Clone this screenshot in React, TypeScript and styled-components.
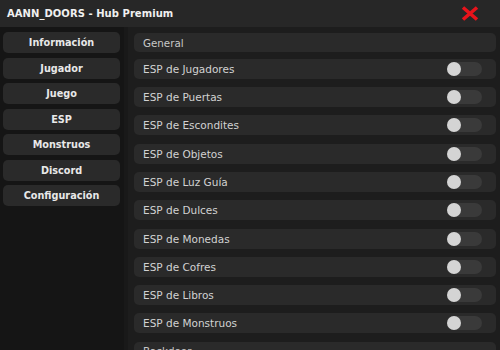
import styled, { createGlobalStyle } from 'styled-components'

const tabs = [
  'Información',
  'Jugador',
  'Juego',
  'ESP',
  'Monstruos',
  'Discord',
  'Configuración',
]

const toggles = [
  'ESP de Jugadores',
  'ESP de Puertas',
  'ESP de Escondites',
  'ESP de Objetos',
  'ESP de Luz Guía',
  'ESP de Dulces',
  'ESP de Monedas',
  'ESP de Cofres',
  'ESP de Libros',
  'ESP de Monstruos',
]

export default function App() {
  return (
    <>
      <GlobalStyle />
      <Window>
        <TitleBar>
          <Title>AANN_DOORS - Hub Premium</Title>
          <CloseButton aria-label="Cerrar">
            <svg width="18" height="15" viewBox="0 0 18 15">
              <path
                d="M2 1.5 L16 13.5 M16 1.5 L2 13.5"
                stroke="#e8131b"
                strokeWidth="3.6"
                strokeLinecap="butt"
              />
            </svg>
          </CloseButton>
        </TitleBar>
        <Body>
          <Sidebar>
            {tabs.map((t) => (
              <TabButton key={t}>{t}</TabButton>
            ))}
          </Sidebar>
          <Content>
            <SectionHeader>General</SectionHeader>
            {toggles.map((t) => (
              <Row key={t}>
                <RowLabel>{t}</RowLabel>
                <Switch>
                  <Knob />
                </Switch>
              </Row>
            ))}
            <SectionHeader>Backdoor</SectionHeader>
          </Content>
        </Body>
      </Window>
    </>
  )
}

const GlobalStyle = createGlobalStyle`
  html, body {
    margin: 0;
    padding: 0;
    background: #1d1d1d;
  }
  * {
    box-sizing: border-box;
  }
`

const Window = styled.div`
  width: 500px;
  height: 350px;
  display: flex;
  flex-direction: column;
  overflow: hidden;
  font-family: 'DejaVu Sans', 'Open Sans', sans-serif;
  color: #e6e6e6;
`

const TitleBar = styled.div`
  height: 27px;
  flex: none;
  display: flex;
  align-items: center;
  justify-content: space-between;
  padding: 0 21px 0 7px;
  background: #272727;
`

const Title = styled.div`
  font-size: 10px;
  font-weight: bold;
  color: #f0f0f0;
  letter-spacing: 0.05px;
`

const CloseButton = styled.div`
  display: flex;
  align-items: center;
  margin-top: -1px;
`

const Body = styled.div`
  flex: 1;
  display: flex;
  min-height: 0;
`

const Sidebar = styled.div`
  width: 128px;
  flex: none;
  display: flex;
  flex-direction: column;
  gap: 4.5px;
  padding: 5px 4px 0 3px;
  background: #151515;
  border-right: 4px solid #191919;
`

const TabButton = styled.div`
  height: 21px;
  display: flex;
  align-items: center;
  justify-content: center;
  border-radius: 5px;
  background: #2a2a2a;
  font-size: 9.7px;
  font-weight: bold;
  color: #e8e8e8;
`

const Content = styled.div`
  flex: 1;
  display: flex;
  flex-direction: column;
  gap: 8.3px;
  padding: 6px 4px 0 6px;
  background: #1d1d1d;
  overflow: hidden;
`

const SectionHeader = styled.div`
  height: 19px;
  flex: none;
  display: flex;
  align-items: center;
  padding-left: 9px;
  border-radius: 5px;
  background: #2a2a2a;
  font-size: 10.3px;
  color: #c8c8c8;
  margin-bottom: -1.5px;
`

const Row = styled.div`
  height: 20px;
  flex: none;
  display: flex;
  align-items: center;
  justify-content: space-between;
  padding: 0 14px 0 9px;
  border-radius: 5px;
  background: #2a2a2a;
`

const RowLabel = styled.span`
  font-size: 10.5px;
  color: #d2d2d2;
`

const Switch = styled.div`
  width: 35px;
  height: 14px;
  border-radius: 7px;
  background: #3a3a3a;
  display: flex;
  align-items: center;
`

const Knob = styled.div`
  width: 14px;
  height: 14px;
  border-radius: 50%;
  background: #d4d4d4;
`
